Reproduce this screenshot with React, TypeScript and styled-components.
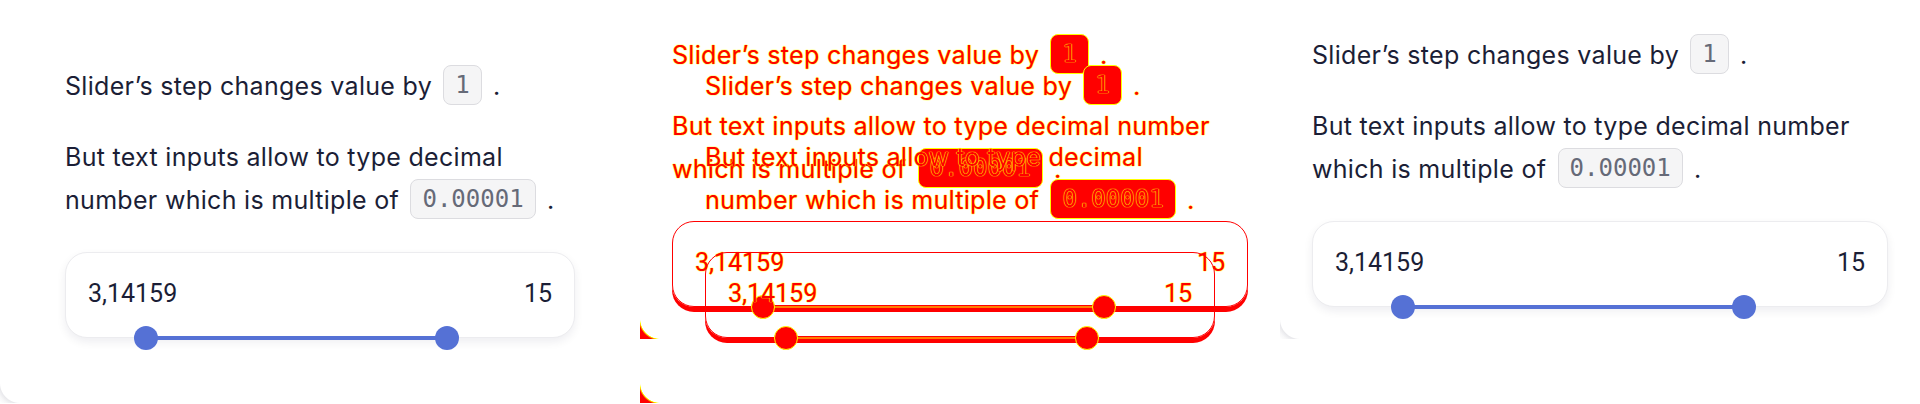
import React from 'react';
import styled, { createGlobalStyle, css } from 'styled-components';

const RED = '#ff0000';
const YELLOW = '#ffff00';
const INK = '#1b1e36';
const BLUE = '#5571d5';

const MIN = 0;
const MAX = 20;
const FROM = 3.14159;
const TO = 15;

const GlobalStyle = createGlobalStyle`
  html, body {
    margin: 0;
    padding: 0;
    background: #ffffff;
  }
  body {
    font-family: Inter, "Liberation Sans", sans-serif;
    -webkit-font-smoothing: antialiased;
  }
`;

const Strip = styled.div`
  display: grid;
  grid-template-columns: repeat(3, 640px);
  width: 1920px;
  height: 404px;
  overflow: hidden;
`;

const Column = styled.div`
  display: grid;
  align-items: start;
  overflow: hidden;
  height: 404px;

  & > * {
    grid-area: 1 / 1;
  }
`;

// pixel-diff look: changed ink in red, anti-aliased edges in yellow
const diffText = css`
  color: ${RED};
  text-shadow: 0 0 1px ${YELLOW}, 0 0 1px ${YELLOW}, 0 0 1px ${YELLOW};
`;

const Panel = styled.section<{ $pad: number; $top: number; $diff?: boolean }>`
  position: relative;
  box-sizing: border-box;
  width: 640px;
  padding: ${(p) => p.$top}px ${(p) => p.$pad}px ${(p) => p.$pad}px;
  background: ${(p) => (p.$diff ? 'transparent' : '#ffffff')};

  &::after {
    content: '';
    position: absolute;
    left: 0;
    bottom: 0;
    width: 20px;
    height: 20px;
    background: ${(p) =>
      p.$diff
        ? `radial-gradient(circle at 100% 0, transparent 19.5px, ${YELLOW} 20px, ${RED} 21.5px)`
        : 'radial-gradient(circle at 100% 0, transparent 19.5px, #e9e9ec 20.5px, #f7f7f8 24px, #ffffff 28px)'};
  }
`;

const Paragraph = styled.p<{ $diff?: boolean }>`
  margin: 0 0 28px;
  font-size: 25px;
  line-height: 43px;
  letter-spacing: 0.3px;
  color: ${INK};
  ${(p) => p.$diff && diffText}
`;

const Chip = styled.code<{ $diff?: boolean }>`
  display: inline-block;
  vertical-align: middle;
  margin: -6px 4px 0;
  padding: 5px 11px;
  font-family: "DejaVu Sans Mono", "Liberation Mono", monospace;
  font-size: 24px;
  line-height: 28px;
  letter-spacing: 0;
  color: #666a78;
  background: #f5f5f6;
  border: 1.5px solid #dcdce0;
  border-radius: 8px;

  ${(p) =>
    p.$diff &&
    css`
      ${diffText};
      background: ${RED};
      border-color: ${YELLOW};
    `}
`;

const SliderCard = styled.div<{ $diff?: boolean }>`
  position: relative;
  box-sizing: border-box;
  height: 86px;
  margin-top: 30px;
  background: #ffffff;
  border: 1.5px solid #ececef;
  border-radius: 22px;
  box-shadow: 0 4px 10px rgba(20, 20, 50, 0.07);

  ${(p) =>
    p.$diff &&
    css`
      background: transparent;
      border-color: ${RED};
      box-shadow: 0 5px 0 ${RED};
    `}
`;

const Values = styled.div<{ $diff?: boolean }>`
  display: flex;
  justify-content: space-between;
  padding: 26px 22px 0;
  font-family: Roboto, Inter, sans-serif;
  font-size: 25px;
  line-height: 30px;
  color: ${INK};
  ${(p) => p.$diff && diffText}
`;

const Track = styled.div`
  position: absolute;
  left: 0;
  right: 0;
  bottom: -1px;
  height: 0;
`;

const Fill = styled.div<{ $diff?: boolean }>`
  position: absolute;
  top: -2px;
  height: 4px;
  background: ${BLUE};

  ${(p) =>
    p.$diff &&
    css`
      background: ${YELLOW};
      box-shadow: inset 0 1.5px 0 ${RED}, inset 0 -1.5px 0 ${RED};
    `}
`;

const Thumb = styled.span<{ $diff?: boolean }>`
  position: absolute;
  top: 0;
  box-sizing: border-box;
  width: 24px;
  height: 24px;
  border-radius: 50%;
  transform: translate(-50%, -50%);
  background: ${BLUE};

  ${(p) =>
    p.$diff &&
    css`
      background: ${RED};
      border: 1px solid ${YELLOW};
    `}
`;

const pct = (v: number) => ((v - MIN) / (MAX - MIN)) * 100;

const Slider: React.FC<{ diff?: boolean }> = ({ diff }) => {
  const a = pct(FROM);
  const b = pct(TO);
  return (
    <SliderCard $diff={diff}>
      <Values $diff={diff}>
        <span>{String(FROM).replace('.', ',')}</span>
        <span>{TO}</span>
      </Values>
      <Track>
        <Fill $diff={diff} style={{ left: `${a}%`, width: `${b - a}%` }} />
        <Thumb $diff={diff} style={{ left: `${a}%` }} />
        <Thumb $diff={diff} style={{ left: `${b}%` }} />
      </Track>
    </SliderCard>
  );
};

const Screen: React.FC<{ pad: number; top: number; diff?: boolean }> = ({ pad, top, diff }) => (
  <Panel $pad={pad} $top={top} $diff={diff}>
    <Paragraph $diff={diff}>
      Slider’s step changes value by <Chip $diff={diff}>1</Chip> .
    </Paragraph>
    <Paragraph $diff={diff}>
      But text inputs allow to type decimal number which is multiple of{' '}
      <Chip $diff={diff}>0.00001</Chip> .
    </Paragraph>
    <Slider diff={diff} />
  </Panel>
);

const App: React.FC = () => (
  <>
    <GlobalStyle />
    <Strip>
      <Column>
        <Screen pad={65} top={65} />
      </Column>
      <Column>
        <Screen pad={32} top={34} diff />
        <Screen pad={65} top={65} diff />
      </Column>
      <Column>
        <Screen pad={32} top={34} />
      </Column>
    </Strip>
  </>
);

export default App;
